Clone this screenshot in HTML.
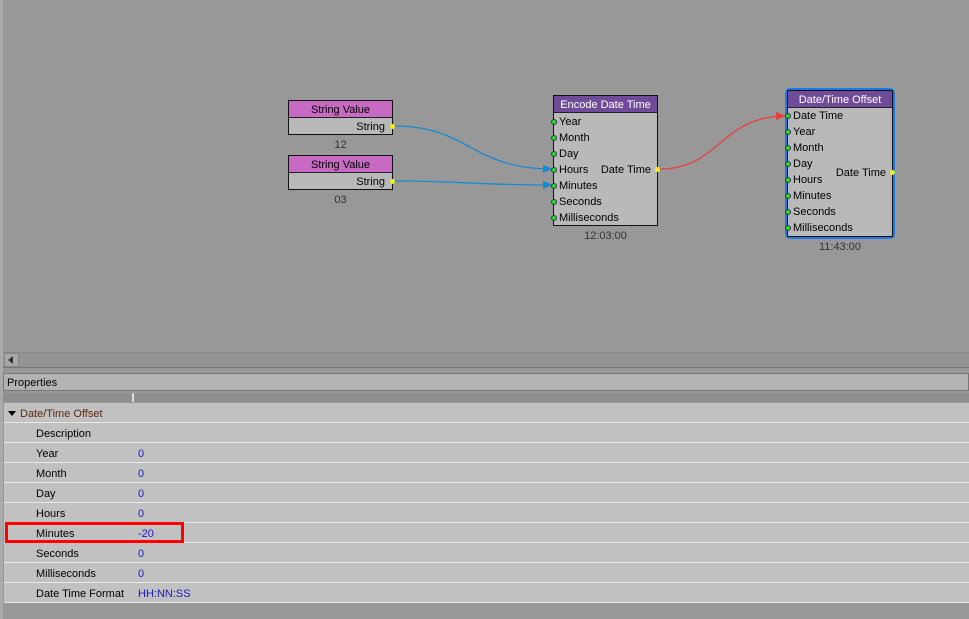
<!DOCTYPE html>
<html><head><meta charset="utf-8"><style>
*{margin:0;padding:0;box-sizing:border-box}
body{width:969px;height:619px;overflow:hidden;background:#989898;font-family:"Liberation Sans",Arial,sans-serif;font-size:11px;color:#000;position:relative}
.a{position:absolute}
.node{position:absolute;background:#b9b9b9;border:1px solid #111}
.hdr{height:17px;color:#000;text-align:center;line-height:18px;font-size:11px;border-bottom:1px solid #222}
.pin{position:absolute;left:-3px;width:6px;height:6px;border-radius:3px;background:#22dd22;border:1px solid #335}
.lbl{position:absolute;left:5px;font-size:11px;margin-top:1px}
.cap{position:absolute;color:#333;font-size:11px;text-align:center;margin-top:1px}
.row{position:absolute;left:4px;width:965px;height:20px;background:#c1c1c1;border-bottom:1px solid #e8e8e8;line-height:22px}
.row .k{position:absolute;left:32px}
.row .v{position:absolute;left:134px;color:#1a1ac8}
</style></head><body>
<div class="a" style="left:0;top:0;width:3px;height:619px;background:#aaa"></div>
<svg class="a" style="left:0;top:0" width="969" height="350">
<defs><marker id="b" markerWidth="10" markerHeight="8" refX="10" refY="4" orient="auto" markerUnits="userSpaceOnUse"><path d="M0,0L10,4L0,8z" fill="#1a8ad0"/></marker>
<marker id="r" markerWidth="10" markerHeight="8" refX="10" refY="4" orient="auto" markerUnits="userSpaceOnUse"><path d="M0,0L10,4L0,8z" fill="#e84040"/></marker></defs>
<path d="M394,126 C470,126 470,169 553,169" stroke="#1a8ad0" stroke-width="1.3" fill="none" marker-end="url(#b)"/>
<path d="M394,181 C470,181 470,185 553,185" stroke="#1a8ad0" stroke-width="1.3" fill="none" marker-end="url(#b)"/>
<path d="M660,169 C720,169 720,116 786,116" stroke="#e84040" stroke-width="1.3" fill="none" marker-end="url(#r)"/>
</svg>
<div class="node" style="left:288px;top:100px;width:105px;height:35px">
<div class="hdr" style="background:#c86ac4">String Value</div>
<div class="a" style="right:7px;top:20px">String</div>
<div class="a" style="right:-3px;top:23px;width:5px;height:5px;border-radius:3px;background:#ee2"></div></div>
<div class="cap" style="left:288px;top:138px;width:105px">12</div>
<div class="node" style="left:288px;top:155px;width:105px;height:35px">
<div class="hdr" style="background:#c86ac4">String Value</div>
<div class="a" style="right:7px;top:20px">String</div>
<div class="a" style="right:-3px;top:23px;width:5px;height:5px;border-radius:3px;background:#ee2"></div></div>
<div class="cap" style="left:288px;top:193px;width:105px">03</div>
<div class="node" style="left:553px;top:95px;width:105px;height:131px">
<div class="hdr" style="background:#6f4b9a;color:#fff">Encode Date Time</div>
<div class="pin" style="top:23px"></div><div class="lbl" style="top:19px">Year</div>
<div class="pin" style="top:39px"></div><div class="lbl" style="top:35px">Month</div>
<div class="pin" style="top:55px"></div><div class="lbl" style="top:51px">Day</div>
<div class="pin" style="top:71px"></div><div class="lbl" style="top:67px">Hours</div>
<div class="pin" style="top:87px"></div><div class="lbl" style="top:83px">Minutes</div>
<div class="pin" style="top:103px"></div><div class="lbl" style="top:99px">Seconds</div>
<div class="pin" style="top:119px"></div><div class="lbl" style="top:115px">Milliseconds</div>
<div class="a" style="right:6px;top:68px">Date Time</div>
<div class="a" style="right:-3px;top:71px;width:5px;height:5px;border-radius:3px;background:#ee2"></div></div>
<div class="cap" style="left:553px;top:229px;width:105px">12:03:00</div>
<div class="a" style="left:785px;top:88px;width:110px;height:151px;border:3px solid #1a7ae8;border-radius:5px"></div>
<div class="node" style="left:787px;top:90px;width:106px;height:147px">
<div class="hdr" style="background:#6f4b9a;color:#fff">Date/Time Offset</div>
<div class="pin" style="top:22px"></div><div class="lbl" style="top:18px">Date Time</div>
<div class="pin" style="top:38px"></div><div class="lbl" style="top:34px">Year</div>
<div class="pin" style="top:54px"></div><div class="lbl" style="top:50px">Month</div>
<div class="pin" style="top:70px"></div><div class="lbl" style="top:66px">Day</div>
<div class="pin" style="top:86px"></div><div class="lbl" style="top:82px">Hours</div>
<div class="pin" style="top:102px"></div><div class="lbl" style="top:98px">Minutes</div>
<div class="pin" style="top:118px"></div><div class="lbl" style="top:114px">Seconds</div>
<div class="pin" style="top:134px"></div><div class="lbl" style="top:130px">Milliseconds</div>
<div class="a" style="right:6px;top:76px">Date Time</div>
<div class="a" style="right:-3px;top:79px;width:5px;height:5px;border-radius:3px;background:#ee2"></div></div>
<div class="cap" style="left:787px;top:240px;width:106px">11:43:00</div>
<div class="a" style="left:3px;top:352px;width:966px;height:16px;background:#949494;border-top:1px solid #888;border-bottom:1px solid #777"></div>
<div class="a" style="left:4px;top:353px;width:15px;height:14px;background:#a8a8a8;border:1px solid #888;border-radius:2px"></div>
<div class="a" style="left:8px;top:356px;width:0;height:0;border-top:4px solid transparent;border-bottom:4px solid transparent;border-right:5px solid #333"></div>
<div class="a" style="left:3px;top:373px;width:966px;height:18px;background:#b3b3b3;border:1px solid #777;line-height:18px;padding-left:3px">Properties</div>
<div class="a" style="left:3px;top:393px;width:966px;height:9px;background:#8f8f8f"></div>
<div class="a" style="left:132px;top:393px;width:2px;height:9px;background:#ddd"></div>
<div class="row" style="top:403px;color:#5a2a10"><span class="a" style="left:4px;top:8px;width:0;height:0;border-left:4px solid transparent;border-right:4px solid transparent;border-top:5px solid #000"></span><span class="a" style="left:16px">Date/Time Offset</span></div>
<div class="row" style="top:423px"><span class="k">Description</span></div>
<div class="row" style="top:443px"><span class="k">Year</span><span class="v">0</span></div>
<div class="row" style="top:463px"><span class="k">Month</span><span class="v">0</span></div>
<div class="row" style="top:483px"><span class="k">Day</span><span class="v">0</span></div>
<div class="row" style="top:503px"><span class="k">Hours</span><span class="v">0</span></div>
<div class="row" style="top:523px"><span class="k">Minutes</span><span class="v">-20</span></div>
<div class="row" style="top:543px"><span class="k">Seconds</span><span class="v">0</span></div>
<div class="row" style="top:563px"><span class="k">Milliseconds</span><span class="v">0</span></div>
<div class="row" style="top:583px"><span class="k">Date Time Format</span><span class="v">HH:NN:SS</span></div>
<div class="a" style="left:5px;top:522px;width:179px;height:21px;border:3px solid #f00"></div>
</body></html>
